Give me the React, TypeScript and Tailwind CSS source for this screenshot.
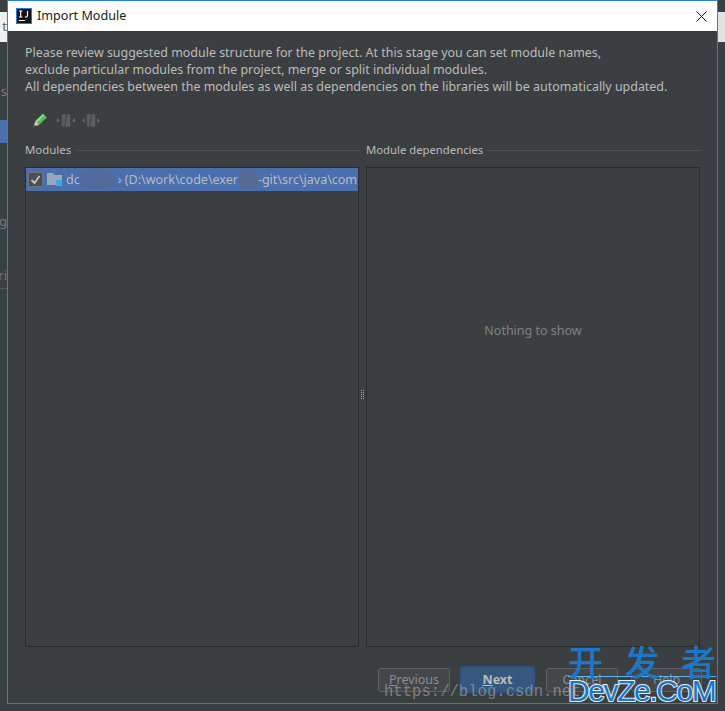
import React from 'react';

const SplitIcon: React.FC<{ outward?: boolean; className?: string }> = ({ outward, className }) => (
    <svg className={className} width="18" height="13" viewBox="0 0 19 13">
        {outward ? (
            <path d="M3 4L0 6.500 3 9zM16 4l3 2.500-3 2.500z" fill="#67696b" />
        ) : (
            <path d="M0 4l3 2.500L0 9zM19 4l-3 2.500 3 2.500z" fill="#67696b" />
        )}
        <path d="M5 0h5L7.500 13H5zM11 0h3v13H8.500z" fill="#5a5d5f" />
    </svg>
);

const App: React.FC = () => {
    return (
        <div className="relative flex h-[711px] w-[725px] overflow-hidden bg-[#3b3e43] font-['Noto_Sans',sans-serif]">
            {/* IDE behind the dialog */}
            <div className="flex w-[7px] shrink-0 flex-col items-end overflow-hidden text-[13px] text-[#77797b]">
                <div className="h-[12px] w-full"></div>
                <div className="flex h-[30px] w-full items-center justify-end bg-[#f0f0f0] text-[#666]">
                    <span>t</span>
                </div>
                <div className="flex h-[78px] w-full items-end justify-end pb-[22px]">
                    <span className="leading-[14px]">s</span>
                </div>
                <div className="h-[23px] w-full bg-[#4b6eaf]"></div>
                <div className="flex h-[87px] w-full items-end justify-end">
                    <span className="whitespace-nowrap leading-[18px]">g</span>
                </div>
                <div className="flex h-[54px] w-full items-end justify-end">
                    <span className="whitespace-nowrap leading-[18px]">ri</span>
                </div>
                <div className="mt-[4px] h-px w-full bg-[#555759]"></div>
            </div>

            <div className="flex h-[704px] w-[711px] shrink-0 flex-col border border-[#2a83d6] bg-[#3c3f41]">
                {/* Title bar */}
                <div className="flex h-[30px] shrink-0 items-center bg-white pl-[8px] pr-[10px]">
                    <svg width="16" height="16" viewBox="0 0 16 16">
                        <rect width="16" height="16" fill="#1a7fd4" />
                        <rect x="1" y="1" width="14" height="14" fill="#111" />
                        <rect x="3" y="12" width="6" height="1" fill="#fff" />
                        <path d="M3 3h3.500M4.700 3v6M3 9h3.500M11.500 3v4.600q0 1.400-1.400 1.400H8.800" fill="none" stroke="#fff" strokeWidth="1.200" />
                    </svg>
                    <span className="ml-[5px] text-[12.6px] text-[#222]">Import Module</span>
                    <svg className="ml-auto" width="11" height="11" viewBox="0 0 11 11">
                        <path d="M.5.5l10 10M10.500.5l-10 10" stroke="#111" strokeWidth="1" />
                    </svg>
                </div>

                <div className="flex min-h-0 flex-1 flex-col px-[17px]">
                    {/* Description */}
                    <div className="mt-[13px] text-[12.44px] leading-[17px] text-[#bbbbbb]">
                        <p>Please review suggested module structure for the project. At this stage you can set module names,</p>
                        <p>exclude particular modules from the project, merge or split individual modules.</p>
                        <p>All dependencies between the modules as well as dependencies on the libraries will be automatically updated.</p>
                    </div>

                    {/* Toolbar */}
                    <div className="mt-[17px] flex h-[16px] items-center pl-[7px]">
                        <svg width="16" height="16" viewBox="0 0 16 16">
                            <path d="M3.500 9L11 2l4 3.500L7 13z" fill="#5cb85c" />
                            <path d="M3.500 9L11 2l1.500 1.300L5 10.500z" fill="#8be08b" />
                            <path d="M3.500 9L1.500 14.500 7 13z" fill="#e3c9a0" />
                            <path d="M1.500 14.500l.7-2 1.400 1.300z" fill="#55585a" />
                        </svg>
                        <SplitIcon className="ml-[9px]" />
                        <SplitIcon className="ml-[7px]" outward />
                    </div>

                    {/* Splitter */}
                    <div className="mt-[13px] flex min-h-0 flex-1">
                        <div className="flex w-[334px] shrink-0 flex-col">
                            <div className="flex h-[18px] items-center gap-[6px] text-[11.4px] text-[#bbbbbb]">
                                <span>Modules</span>
                                <div className="h-px flex-1 bg-[#505253]"></div>
                            </div>
                            <div className="mt-[8px] flex-1 border border-[#2b2b2b] bg-[#3c3f41]">
                                <div className="relative flex h-[23px] items-center overflow-hidden whitespace-nowrap bg-[#4b6eaf] pl-[2px] text-[12.5px] text-[#bbbbbb]">
                                    <div className="flex h-[15px] w-[15px] shrink-0 items-center justify-center rounded-[2px] border border-[#6f7173] bg-[#4a4e52]">
                                        <svg width="11" height="11" viewBox="0 0 11 11">
                                            <path d="M1.500 6l3 3 5-7" fill="none" stroke="#c4c4c4" strokeWidth="1.800" />
                                        </svg>
                                    </div>
                                    <svg className="ml-[4px] shrink-0" width="17" height="15" viewBox="0 0 17 15">
                                        <path d="M0 1h6l1.500 2H15v10H0z" fill="#9aa7b8" />
                                        <rect x="9" y="8" width="6" height="6" fill="#3ea6dc" />
                                    </svg>
                                    <span className="ml-[2px] pt-[2px]">dc</span>
                                    <span className="ml-[38px] pt-[2px]">› (D:\work\code\exer</span>
                                    <span className="ml-[20px] pt-[2px]">-git\src\java\com</span>
                                    <div className="absolute left-[53px] top-[1px] h-[20px] w-[36px] rounded-[10px] bg-[#516a9b]"></div>
                                    <div className="absolute left-[213px] top-[1px] h-[20px] w-[20px] rounded-full bg-[#576a92]"></div>
                                </div>
                            </div>
                        </div>

                        <div className="flex w-[7px] shrink-0 items-center justify-center">
                            <div className="grid grid-cols-2 gap-[1px]">
                                {Array.from({ length: 10 }).map((_, i) => (
                                    <div key={i} className="h-px w-px bg-[#a8a8a8]"></div>
                                ))}
                            </div>
                        </div>

                        <div className="flex min-w-0 flex-1 flex-col">
                            <div className="flex h-[18px] items-center gap-[6px] text-[11.3px] text-[#bbbbbb]">
                                <span>Module dependencies</span>
                                <div className="h-px flex-1 bg-[#505253]"></div>
                            </div>
                            <div className="mt-[8px] flex flex-1 items-center justify-center border border-[#2b2b2b] pb-[152px] text-[12.5px] text-[#7f8183]">
                                Nothing to show
                            </div>
                        </div>
                    </div>

                    {/* Buttons */}
                    <div className="-mr-[2px] mb-[10px] mt-[19px] flex h-[27px] shrink-0 items-center justify-end text-[12.5px] text-[#8b8d8f]">
                        <button className="h-[24px] w-[72px] rounded-[3px] border border-[#5e6061] bg-[#43474a] pt-[2px]"><u>P</u>revious</button>
                        <button className="ml-[10px] h-[27px] w-[75px] rounded-[3px] border-2 border-[#2f5483] bg-[#365880] pt-[2px] font-bold text-[#bbbbbb]"><u>N</u>ext</button>
                        <button className="ml-[11px] h-[24px] w-[72px] rounded-[3px] border border-[#5e6061] bg-[#43474a] pt-[2px]">Cancel</button>
                        <button className="ml-[13px] h-[24px] w-[71px] rounded-[3px] border border-[#5e6061] bg-[#43474a] pt-[2px]">Help</button>
                    </div>
                </div>
            </div>

            <div className="flex w-[7px] shrink-0 flex-col">
                <div className="h-[12px]"></div>
                <div className="h-[30px] bg-[#e2e2e2]"></div>
            </div>

            {/* Watermarks over the dialog */}
            <div className="absolute left-[384px] top-[682px] whitespace-nowrap font-['Liberation_Mono',monospace] text-[15.600px] leading-[20px] text-[#9a9c9d]/70">
                https://blog.csdn.net/
            </div>
            <div className="absolute left-[568px] top-[646px] flex w-[148px] flex-col text-[#1a78c8]">
                <div className="flex h-[31px] items-center justify-between border-b border-[#63b2ea] font-['Noto_Sans_CJK_SC',sans-serif] text-[35px] font-medium leading-[30px]">
                    <span>开</span>
                    <span>发</span>
                    <span>者</span>
                </div>
                <div className="whitespace-nowrap font-['Liberation_Sans',sans-serif] text-[30px] leading-[28px] tracking-[-1.400px] [paint-order:stroke_fill] [-webkit-text-stroke:2px_#e8f0f8]">
                    DevZe.CoM
                </div>
            </div>
        </div>
    );
};

export default App;
